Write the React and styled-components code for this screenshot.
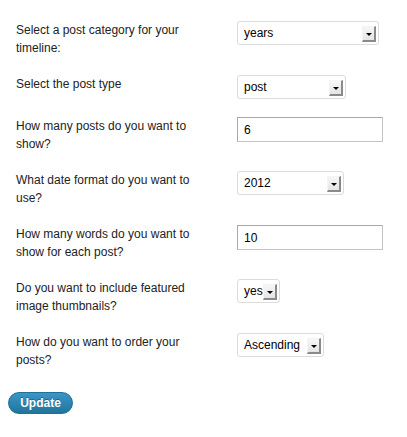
import React from "react";
import styled, { createGlobalStyle } from "styled-components";

const Global = createGlobalStyle`
  html, body { margin: 0; padding: 0; background: #fff; }
  body { font-family: "Liberation Sans", Arial, Helvetica, sans-serif; }
`;

const Page = styled.div`
  width: 407px;
  height: 437px;
  box-sizing: border-box;
  padding-top: 21px;
`;

const Form = styled.div`
  display: grid;
  grid-template-columns: 221px auto;
  row-gap: 18px;
  align-items: start;
  margin-left: 16px;
`;

const Label = styled.div`
  font-size: 12px;
  line-height: 18px;
  color: #222;
  width: 190px;
`;

const SelectBox = styled.div`
  box-sizing: border-box;
  width: ${(p) => p.$w}px;
  height: 24px;
  border: 1px solid #dcdcdc;
  border-radius: 3px;
  background: #fff;
  display: flex;
  align-items: center;
  justify-content: space-between;
  padding: 0 2px 0 6px;
  font-size: 12px;
  color: #000;
`;

const Arrow = styled.span`
  box-sizing: border-box;
  flex: none;
  width: 14px;
  height: 16px;
  margin-top: 2px;
  background: linear-gradient(#f7f7f7, #e4e4e4);
  border-right: 2px solid #8a8a8a;
  border-bottom: 2px solid #8a8a8a;
  border-top: 1px solid #f4f4f4;
  border-left: 1px solid #f4f4f4;
  display: flex;
  align-items: center;
  justify-content: center;
  &::after {
    content: "";
    display: block;
    margin-top: 2px;
    border-left: 3px solid transparent;
    border-right: 3px solid transparent;
    border-top: 3px solid #000;
  }
`;

const TextInput = styled.div`
  box-sizing: border-box;
  width: 146px;
  height: 25px;
  border: 1px solid #a9a9a9;
  border-right-color: #c4c4c4;
  border-bottom-color: #c4c4c4;
  background: #fff;
  display: flex;
  align-items: center;
  padding-left: 6px;
  font-size: 12px;
  color: #000;
`;

const Button = styled.button`
  display: block;
  margin: 23px 0 0 8px;
  height: 22px;
  width: 65px;
  border-radius: 11px;
  border: 1px solid #1f6f98;
  background: linear-gradient(#3a95c8, #21759b);
  color: #fff;
  font-family: "Liberation Sans", Arial, sans-serif;
  font-weight: bold;
  font-size: 12px;
  padding: 0;
  text-shadow: 0 -1px 0 rgba(0, 0, 0, 0.3);
  cursor: pointer;
`;

const Select = ({ value, w }) => (
  <SelectBox $w={w}>
    <span>{value}</span>
    <Arrow />
  </SelectBox>
);

const rows = [
  { label: "Select a post category for your timeline:", type: "select", value: "years", w: 142 },
  { label: "Select the post type", type: "select", value: "post", w: 109 },
  { label: "How many posts do you want to show?", type: "input", value: "6" },
  { label: "What date format do you want to use?", type: "select", value: "2012", w: 107 },
  { label: "How many words do you want to show for each post?", type: "input", value: "10" },
  { label: "Do you want to include featured image thumbnails?", type: "select", value: "yes", w: 43 },
  { label: "How do you want to order your posts?", type: "select", value: "Ascending", w: 87 },
];

export default function App() {
  return (
    <Page>
      <Global />
      <Form>
        {rows.map((r, i) => (
          <React.Fragment key={i}>
            <Label>{r.label}</Label>
            <div>
              {r.type === "select" ? (
                <Select value={r.value} w={r.w} />
              ) : (
                <TextInput>{r.value}</TextInput>
              )}
            </div>
          </React.Fragment>
        ))}
      </Form>
      <Button>Update</Button>
    </Page>
  );
}
